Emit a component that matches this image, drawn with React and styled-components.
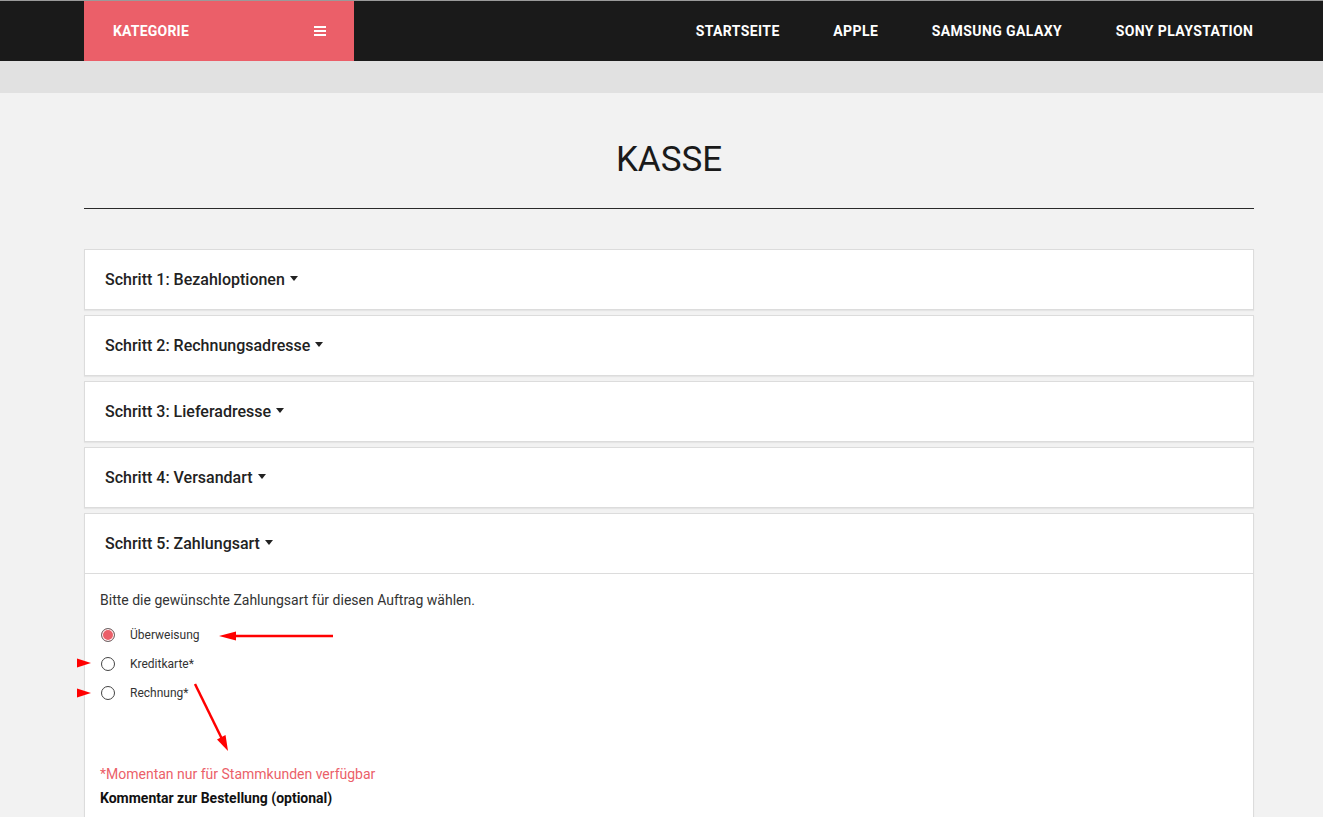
import React from "react";
import styled, { createGlobalStyle } from "styled-components";

const Global = createGlobalStyle`
  * { box-sizing: border-box; }
  html, body { margin: 0; padding: 0; }
  body {
    background: #f2f2f2;
    font-family: Roboto, "Liberation Sans", Arial, sans-serif;
    color: #222;
    border-top: 1px solid #9a9a9a;
  }
`;

const NavBar = styled.header`
  background: #1a1a1a;
  height: 60px;
`;

const Container = styled.div`
  width: 1170px;
  margin-left: 84px;
`;

const NavInner = styled(Container)`
  display: flex;
  align-items: stretch;
  justify-content: space-between;
  height: 100%;
`;

const CategoryButton = styled.div`
  width: 270px;
  background: #eb5f69;
  color: #fff;
  display: flex;
  align-items: center;
  justify-content: space-between;
  padding: 0 28px 0 29px;
  font-size: 14px;
  font-weight: 700;
  letter-spacing: 0.2px;
`;

const Burger = styled.span`
  display: flex;
  flex-direction: column;
  gap: 2px;
  width: 12px;
  & > i {
    display: block;
    height: 2px;
    background: #fff;
  }
`;

const NavLinks = styled.nav`
  display: flex;
  align-items: center;
  gap: 54px;
  padding-bottom: 1px;
  padding-right: 1px;
`;

const NavLink = styled.a`
  color: #fff;
  font-size: 14px;
  font-weight: 700;
  text-decoration: none;
  letter-spacing: 0.4px;
  margin-right: -0.4px;
`;

const Band = styled.div`
  height: 32px;
  background: #e1e1e1;
`;

const Main = styled(Container)`
  padding-top: 47px;
`;

const Title = styled.h1`
  margin: 0;
  text-align: center;
  font-size: 35px;
  line-height: 40px;
  font-weight: 400;
  color: #1a1a1a;
`;

const Rule = styled.hr`
  margin: 28px 0 40px;
  border: 0;
  border-top: 1px solid #2a2a2a;
`;

const Panel = styled.section`
  background: #fff;
  border: 1px solid #dcdcdc;
  box-shadow: 0 1px 1px rgba(0, 0, 0, 0.05);
  margin-bottom: 5px;
`;

const PanelHeading = styled.div`
  height: ${(p) => (p.$open ? "60px" : "59px")};
  display: flex;
  align-items: center;
  padding: 0 20px;
  font-size: 16px;
  font-weight: 500;
  color: #222;
  border-bottom: ${(p) => (p.$open ? "1px solid #dcdcdc" : "none")};
`;

const Caret = styled.span`
  display: inline-block;
  margin-left: 5px;
  width: 0;
  height: 0;
  border-left: 4.5px solid transparent;
  border-right: 4.5px solid transparent;
  border-top: 5px solid #222;
  position: relative;
  top: -1px;
`;

const PanelBody = styled.div`
  position: relative;
  padding: 16px 15px 40px;
`;

const Intro = styled.p`
  margin: 0 0 10px;
  font-size: 14px;
  line-height: 20px;
  color: #333;
`;

const RadioRow = styled.label`
  display: flex;
  align-items: center;
  height: 29px;
  padding-left: 1px;
  gap: 15px;
  font-size: 12px;
  color: #333;
`;

const RadioDot = styled.span`
  width: 14px;
  height: 14px;
  border-radius: 50%;
  border: 1px solid ${(p) => (p.$checked ? "#6b6b6b" : "#444")};
  background: ${(p) => (p.$checked ? "#eb5f69" : "#fff")};
  box-shadow: ${(p) => (p.$checked ? "inset 0 0 0 1px #fff" : "none")};
  flex: none;
`;

const Note = styled.p`
  margin: 57px 0 4px;
  font-size: 14px;
  line-height: 20px;
  color: #eb5f69;
`;

const CommentLabel = styled.p`
  margin: 0 0 12px;
  font-size: 14px;
  line-height: 20px;
  font-weight: 700;
  color: #111;
`;

const TextArea = styled.textarea`
  width: 100%;
  height: 80px;
  border: 1px solid #ccc;
  resize: none;
  font-family: inherit;
`;

const Annotations = styled.svg`
  position: absolute;
  left: 0;
  top: 0;
  overflow: visible;
  pointer-events: none;
`;

const steps = [
  "Schritt 1: Bezahloptionen",
  "Schritt 2: Rechnungsadresse",
  "Schritt 3: Lieferadresse",
  "Schritt 4: Versandart",
];

const options = [
  { label: "Überweisung", checked: true },
  { label: "Kreditkarte*", checked: false },
  { label: "Rechnung*", checked: false },
];

export default function App() {
  return (
    <>
      <Global />
      <NavBar>
        <NavInner>
          <CategoryButton>
            <span>KATEGORIE</span>
            <Burger>
              <i />
              <i />
              <i />
            </Burger>
          </CategoryButton>
          <NavLinks>
            <NavLink href="#">STARTSEITE</NavLink>
            <NavLink href="#">APPLE</NavLink>
            <NavLink href="#">SAMSUNG GALAXY</NavLink>
            <NavLink href="#">SONY PLAYSTATION</NavLink>
          </NavLinks>
        </NavInner>
      </NavBar>
      <Band />
      <Main>
        <Title>KASSE</Title>
        <Rule />
        {steps.map((s) => (
          <Panel key={s}>
            <PanelHeading>
              {s}
              <Caret />
            </PanelHeading>
          </Panel>
        ))}
        <Panel>
          <PanelHeading $open>
            Schritt 5: Zahlungsart
            <Caret />
          </PanelHeading>
          <PanelBody>
            <Intro>Bitte die gewünschte Zahlungsart für diesen Auftrag wählen.</Intro>
            {options.map((o) => (
              <RadioRow key={o.label}>
                <RadioDot $checked={o.checked} />
                {o.label}
              </RadioRow>
            ))}
            <Note>*Momentan nur für Stammkunden verfügbar</Note>
            <CommentLabel>Kommentar zur Bestellung (optional)</CommentLabel>
            <TextArea />
            <Annotations width="1" height="1">
              <g fill="#f00" stroke="#f00">
                <line x1="248" y1="62" x2="148" y2="62" strokeWidth="2.5" />
                <polygon points="134,62 151,57.5 151,66.5" stroke="none" />
                <polygon points="6,89 -8,84.5 -8,93.5" stroke="none" />
                <polygon points="6,119 -8,114.5 -8,123.5" stroke="none" />
                <line x1="110" y1="110" x2="137" y2="165" strokeWidth="2.5" />
                <polygon points="143,177 140.5,161 132,165.5" stroke="none" />
              </g>
            </Annotations>
          </PanelBody>
        </Panel>
      </Main>
    </>
  );
}
